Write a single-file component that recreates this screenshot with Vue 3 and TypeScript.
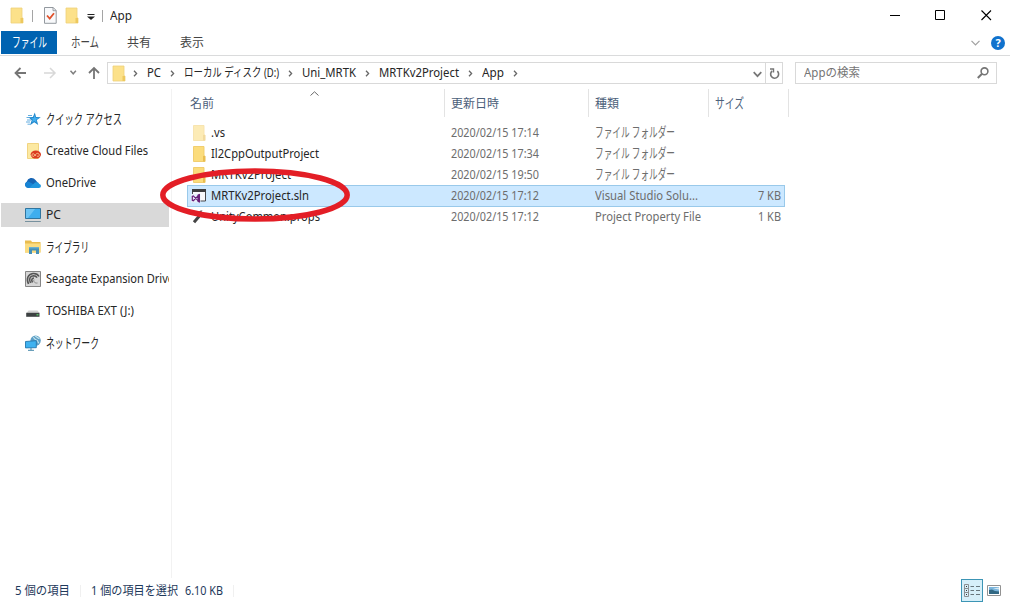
<script setup lang="ts">
import type { Directive } from 'vue'

// Condenses or widens a label so that it takes exactly the given width.
const vFit: Directive<HTMLElement, number> = {
  mounted(el, binding) {
    const natural = el.getBoundingClientRect().width
    if (!natural) return
    el.style.transform = `scaleX(${binding.value / natural})`
    el.style.marginRight = `${binding.value - natural}px`
  },
}

const tabs = [
  { text: 'ファイル', width: 35, box: 56, active: true, kana: true },
  { text: 'ホーム', width: 28, box: 55, kana: true },
  { text: '共有', width: 24, box: 54 },
  { text: '表示', width: 24, box: 52 },
]

const crumbs = [
  { text: 'PC', width: 14 },
  { text: 'ローカル ディスク (D:)', width: 95 },
  { text: 'Uni_MRTK', width: 54 },
  { text: 'MRTKv2Project', width: 80 },
  { text: 'App', width: 22 },
]

const places = [
  { icon: 'star', text: 'クイック アクセス', width: 76, kana: true },
  { icon: 'creative', text: 'Creative Cloud Files', width: 102 },
  { icon: 'cloud', text: 'OneDrive', width: 50 },
  { icon: 'pc', text: 'PC', width: 15, current: true },
  { icon: 'library', text: 'ライブラリ', width: 43, kana: true },
  { icon: 'seagate', text: 'Seagate Expansion Drive', width: 128 },
  { icon: 'drive', text: 'TOSHIBA EXT (J:)', width: 88 },
  { icon: 'network', text: 'ネットワーク', width: 53, kana: true },
]

const files = [
  { icon: 'faded', name: '.vs', w: 14, date: '2020/02/15 17:14', type: 'ファイル フォルダー', tw: 80, kana: true, size: '', sw: 0 },
  { icon: 'folder', name: 'Il2CppOutputProject', w: 108, date: '2020/02/15 17:34', type: 'ファイル フォルダー', tw: 80, kana: true, size: '', sw: 0 },
  { icon: 'folder', name: 'MRTKv2Project', w: 80, date: '2020/02/15 19:50', type: 'ファイル フォルダー', tw: 80, kana: true, size: '', sw: 0 },
  { icon: 'sln', name: 'MRTKv2Project.sln', w: 98, date: '2020/02/15 17:12', type: 'Visual Studio Solu...', tw: 103, size: '7 KB', sw: 23, selected: true },
  { icon: 'props', name: 'UnityCommon.props', w: 109, date: '2020/02/15 17:12', type: 'Project Property File', tw: 106, size: '1 KB', sw: 23 },
]
</script>

<template>
  <div class="window">
    <header class="titlebar">
      <svg class="qa-folder" width="14" height="17" viewBox="0 0 14 17"><path d="M1 1h11v10h1v5H1z" fill="#fce18a" stroke="#efd078" stroke-width=".8" /><path d="M10.500 11h2.500v5h-2.500z" fill="#edc85e" /></svg>
      <i class="bar first"></i>
      <svg class="qa-check" width="13" height="17" viewBox="0 0 13 17"><path d="M.5.5h8.700l3 3v12.800H.5z" fill="#f8f9fb" stroke="#93999f" /><path d="M9 .5v3.200h3" fill="none" stroke="#83898f" stroke-width=".8" /><path d="M3 8.500l2.700 3L10 6.200" fill="none" stroke="#e0512b" stroke-width="1.800" /></svg>
      <svg class="qa-folder second" width="14" height="17" viewBox="0 0 14 17"><path d="M1 1h11v10h1v5H1z" fill="#fce18a" stroke="#efd078" stroke-width=".8" /><path d="M10.500 11h2.500v5h-2.500z" fill="#edc85e" /></svg>
      <svg class="qa-menu" width="8" height="8" viewBox="0 0 8 8"><path d="M.5 1.500h7" stroke="#222" /><path d="M0 3.500h8L4 7z" fill="#222" /></svg>
      <i class="bar"></i>
      <span v-fit="22">App</span>
      <div class="controls">
        <svg width="11" height="11" viewBox="0 0 11 11"><path d="M1 5.500h10" stroke="#000" /></svg>
        <svg width="11" height="11" viewBox="0 0 11 11"><path d="M.5.5h9v9h-9z" fill="none" stroke="#000" /></svg>
        <svg width="11" height="11" viewBox="0 0 11 11"><path d="M.5.5l9.500 9.500M10 .5L.5 10" stroke="#000" stroke-width="1.100" /></svg>
      </div>
    </header>

    <nav class="ribbon">
      <div v-for="t in tabs" :key="t.text" class="tab" :class="{ active: t.active, kana: t.kana }" :style="{ width: t.box + 'px' }">
        <span v-fit="t.width">{{ t.text }}</span>
      </div>
      <div class="ribbon-end">
        <svg width="9" height="6" viewBox="0 0 9 6"><path d="M.5.8l4 4 4-4" fill="none" stroke="#a0a0a0" stroke-width="1.200" /></svg>
        <span class="help">?</span>
      </div>
    </nav>

    <div class="navbar">
      <svg class="nav-arrows" width="88" height="14" viewBox="0 0 88 14" fill="none">
        <path d="M12 7H1.500M6.500 2l-5 5 5 5" stroke="#757575" stroke-width="1.800" />
        <path d="M30 7h11M36 2l5 5-5 5" stroke="#d8d8d8" stroke-width="1.500" />
        <path d="M56.500 4.800l2.700 3 2.700-3" stroke="#808080" stroke-width="1.500" />
        <path d="M80 13V2M75 7l5-5 5 5" stroke="#757575" stroke-width="1.800" />
      </svg>
      <div class="address">
        <svg class="address-folder" width="14" height="17" viewBox="0 0 14 17"><path d="M1 1h11v10h1v5H1z" fill="#fce18a" stroke="#efd078" stroke-width=".8" /><path d="M10.500 11h2.500v5h-2.500z" fill="#edc85e" /></svg>
        <svg class="chev" width="5" height="7" viewBox="0 0 5 7"><path d="M1 .8l2.600 2.700L1 6.200" fill="none" stroke="#686868" stroke-width="1.300" /></svg>
        <template v-for="c in crumbs" :key="c.text">
          <span v-fit="c.width">{{ c.text }}</span>
          <svg class="chev" width="5" height="7" viewBox="0 0 5 7"><path d="M1 .8l2.600 2.700L1 6.200" fill="none" stroke="#686868" stroke-width="1.300" /></svg>
        </template>
        <svg class="drop" width="9" height="7" viewBox="0 0 9 7"><path d="M.7 1.200l3.800 4 3.800-4" fill="none" stroke="#777" stroke-width="1.700" /></svg>
        <div class="refresh">
          <svg width="11" height="13" viewBox="0 0 11 13" fill="none" stroke="#757575"><path d="M8.300 4.200A4 4 0 1 1 3.200 4" stroke-width="1.600" /><path d="M1 2h3.500v3.500" stroke-width="1.400" /></svg>
        </div>
      </div>
      <div class="search">
        <span v-fit="56">Appの検索</span>
        <svg width="12" height="12" viewBox="0 0 12 12"><circle cx="7.500" cy="4.300" r="3.400" fill="none" stroke="#757575" stroke-width="1.600" /><path d="M5 6.800L.8 11" stroke="#757575" stroke-width="2" /></svg>
      </div>
    </div>

    <main class="content">
      <aside class="sidebar">
        <div v-for="p in places" :key="p.text" class="place" :class="{ current: p.current, kana: p.kana }">
          <svg class="place-icon" width="16" height="16" viewBox="0 0 16 16">
            <g v-if="p.icon === 'star'">
              <path d="M9.800 1.500l1.300 4.400 4.700.3-4 2.800 1.400 4.900-4-2.700-4.200 3 1.700-5L3.500 6.200l4.400-.2z" fill="#2187cb" />
              <path d="M9.700 4l1 3 3 .2-2.700 1.600.7 2.800-2.500-1.700-2.400 1.600.9-2.900-1.700-1.300 2.700-.2z" fill="#43aeef" />
              <path d="M3 4.500h4M1.500 6.500h3M2 9h4M1 11h4M2.500 13.200H5" stroke="#3a98d8" stroke-width=".8" />
            </g>
            <g v-else-if="p.icon === 'creative'">
              <path d="M2.500.5h11v15h-11z" fill="#fce9a2" stroke="#efd078" stroke-width=".9" />
              <ellipse cx="10.800" cy="11.600" rx="5.200" ry="4" fill="#dc3b20" />
              <path d="M10.800 13l-1.500-1.700c-1-1.100-2.400-.5-2.400.7 0 1 .9 1.500 1.700 1.400.8-.1 2.500-3.100 3.700-3.100 1.400 0 2 1 2 1.800 0 1.100-1.100 1.700-2.400.9" fill="none" stroke="#fbd9a2" stroke-width=".8" />
            </g>
            <g v-else-if="p.icon === 'cloud'">
              <path d="M3.500 13A3.400 3.400 0 0 1 1.700 6.700 5 5 0 0 1 10.500 5l2.500 3-4 5z" fill="#1765b5" />
              <path d="M4 13c-2 0-4-1-4-3.200 0-2 1.700-3.300 3.500-3.300l8 4.500z" fill="#1683d4" />
              <path d="M4 13L10 7.500c2.600-1 4 .3 4.300 1.500C16.600 9.500 16.500 13 13.700 13z" fill="#2196de" />
            </g>
            <g v-else-if="p.icon === 'pc'">
              <path d="M.5 1.500h15v10H.5z" fill="#3faeee" stroke="#30759f" />
              <path d="M1 2h9l-7 9H1z" fill="#6cc4f4" />
              <path d="M0 14.500h15.800" stroke="#77919e" stroke-width="1" />
            </g>
            <g v-else-if="p.icon === 'library'">
              <path d="M0 1.500h6l1 1.500h8.500V13.500H0z" fill="#e9bc4e" /><path d="M0 4.500h15.500v9H0z" fill="#fbdc80" />
              <path d="M4 8h10v7h-3v-3.500H7V15H4z" fill="#4590b8" /><path d="M4 8h10v1.400H4z" fill="#6bb0d0" />
            </g>
            <g v-else-if="p.icon === 'seagate'">
              <path d="M.5.500h15v15H.5z" fill="#d6d6d6" stroke="#858585" />
              <path d="M3.500 13C1 8 3 3 8 2.500c3-.2 5 1 6 3M5.500 12C3.500 8 5 5 8.500 4.700c2 0 3 1 3.500 2M7.500 11.500C6 9 7 7 9 7" fill="none" stroke="#555" stroke-width="1.600" />
              <path d="M9 8.500c-1 2 1 4 3.500 3.500" fill="none" stroke="#888" />
            </g>
            <g v-else-if="p.icon === 'drive'">
              <path d="M3.500 7.500h9L14.500 10h-13z" fill="#d2d2d2" /><path d="M1.200 9.800h13.300v4H1.200z" fill="#3d4142" />
              <path d="M11.500 11.200h2v1.200h-2z" fill="#5bd36a" />
            </g>
            <g v-else>
              <circle cx="10.600" cy="5.600" r="5.200" fill="#5b9fc6" /><path d="M8 2.500c2 .5 1 2 3.500 2.500S12 7.500 14 8M10 1c2 1 2.500 2 4.500 2.700" fill="none" stroke="#c5e4ee" stroke-width="1.100" />
              <path d="M.5 6.500l10.800-.8v7L.5 12.900z" fill="#3fb2f0" stroke="#2577ad" stroke-width=".9" /><path d="M6 13v2M3 15.300h6" stroke="#4588a9" />
            </g>
          </svg>
          <span v-fit="p.width">{{ p.text }}</span>
        </div>
      </aside>

      <section class="list">
        <div class="columns">
          <div class="col c-name"><span v-fit="24">名前</span>
            <svg class="sort" width="9" height="5" viewBox="0 0 9 5"><path d="M.5 4.500l4-3.700 4 3.700" fill="none" stroke="#696969" stroke-width="1" /></svg>
          </div>
          <div class="col c-date"><span v-fit="48">更新日時</span></div>
          <div class="col c-type"><span v-fit="24">種類</span></div>
          <div class="col c-size kana"><span v-fit="29">サイズ</span></div>
        </div>
        <div v-for="f in files" :key="f.name" class="row" :class="{ selected: f.selected }">
          <div class="cell c-name">
            <svg width="16" height="16" viewBox="0 0 16 16">
              <g v-if="f.icon === 'folder' || f.icon === 'faded'" :opacity="f.icon === 'faded' ? 0.55 : 1">
                <path d="M2.500.5h10.500v9.500h1v5.500h-11.500z" fill="#fbdc7c" stroke="#efcb68" stroke-width=".9" /><path d="M12 10h2.200v5.500H12z" fill="#e9bd50" />
              </g>
              <g v-else-if="f.icon === 'sln'">
                <path d="M1.500 1.500h13v11.500h-13z" fill="#f7f7fa" stroke="#48484c" /><path d="M1 1h14v3H1z" fill="#3d3d40" />
                <path d="M0 6h9.500v8.500H0z" fill="#e6eefa" />
                <path d="M1.300 8.300v4l1 .4 5.200-5.200v5.600L2.300 7.900z" fill="none" stroke="#68217a" stroke-width="1.200" /><path d="M6.500 6.800l2.500-1v9l-2.500-1z" fill="#68217a" />
              </g>
              <g v-else>
                <path d="M3 13.200l6-7" stroke="#444" stroke-width="3" /><path d="M7.500 6.500C6.500 3 9 1 11.500 1.500L9.800 3.800l1.800 1.700L14 4c.5 3-2 5-4.500 4z" fill="#555" />
              </g>
            </svg>
            <span v-fit="f.w">{{ f.name }}</span>
          </div>
          <div class="cell c-date"><span v-fit="88">{{ f.date }}</span></div>
          <div class="cell c-type" :class="{ kana: f.kana }"><span v-fit="f.tw">{{ f.type }}</span></div>
          <div class="cell c-size"><span v-if="f.size" v-fit="f.sw">{{ f.size }}</span></div>
        </div>
      </section>
    </main>

    <footer class="status">
      <span v-fit="55">5 個の項目</span><i></i>
      <span v-fit="87">1 個の項目を選択</span><span v-fit="38" class="bytes">6.10 KB</span><i></i>
      <div class="views">
        <div class="details">
          <svg width="16" height="14" viewBox="0 0 16 14" fill="none"><path d="M.5.5h4v12h-4zM.5 4.500h4M.5 8.500h4" stroke="#8b8f92" /><path d="M2 2.500h1M2 6.500h1M2 10.500h1" stroke="#333" /><path d="M6.500 2.500h3.500M12 2.500h4M6.500 6.500h3.500M12 6.500h4M6.500 10.500h3.500M12 10.500h4" stroke="#68767c" /></svg>
        </div>
        <svg class="thumbs" width="14" height="11" viewBox="0 0 14 11"><path d="M.5.5h13v10H.5z" fill="#fff" stroke="#929292" /><path d="M2 2h10v7H2z" fill="#7bb5dc" /><path d="M2 5l3-.5 3 1.500 4 .5V9H2z" fill="#326883" /><path d="M6 3.500l6-1v2z" fill="#d7e9f3" /></svg>
      </div>
    </footer>

    <svg class="marker" width="190" height="54" viewBox="0 0 190 54"><ellipse cx="95" cy="27" rx="92.200" ry="24" fill="none" stroke="#e31e26" stroke-width="5.500" /></svg>
  </div>
</template>

<style>
body {
  margin: 0;
  background: #fff;
}
</style>

<style scoped>
.window {
  position: relative;
  display: flex;
  flex-direction: column;
  width: 1010px;
  height: 603px;
  overflow: hidden;
  background: #fff;
  color: #262626;
  font: 12px/20px "Noto Sans", "Noto Sans CJK JP", sans-serif;
}
.window svg {
  display: block;
  flex: none;
}
.window span {
  display: inline-block;
  flex: none;
  white-space: nowrap;
  transform-origin: 0 50%;
}
.window .kana {
  font-size: 13.5px;
}
.titlebar {
  display: flex;
  align-items: center;
  flex: none;
  height: 31px;
  padding-left: 10px;
}
.bar {
  width: 1px;
  height: 12px;
  margin: 0 7px;
  background: #a5a5a5;
}
.bar.first {
  margin: 0 11px 0 8px;
}
.qa-folder.second {
  margin-left: 8px;
}
.qa-menu {
  margin: 3px 0 0 8px;
}
.controls {
  display: flex;
  gap: 35px;
  margin: 0 18px 0 auto;
}
.ribbon {
  display: flex;
  flex: none;
  box-sizing: border-box;
  height: 25px;
  padding-left: 1px;
  border-bottom: 1px solid #dadbdc;
}
.tab {
  display: flex;
  justify-content: center;
  height: 23px;
  line-height: 23px;
  color: #444;
}
.tab.active {
  background: #0063b1;
  color: #fff;
}
.ribbon-end {
  display: flex;
  align-items: center;
  gap: 11px;
  height: 24px;
  margin: 0 5px 0 auto;
}
.ribbon-end .help {
  width: 14px;
  height: 14px;
  border-radius: 50%;
  background: #1072cd;
  color: #fff;
  font-size: 11px;
  font-weight: bold;
  line-height: 14px;
  text-align: center;
}
.navbar {
  display: flex;
  align-items: center;
  flex: none;
  height: 33px;
  padding-top: 1px;
  box-sizing: border-box;
}
.nav-arrows {
  margin-left: 14px;
}
.address {
  display: flex;
  align-items: center;
  box-sizing: border-box;
  width: 676px;
  height: 22px;
  margin-left: 5px;
  padding-left: 4px;
  border: 1px solid #d9d9d9;
}
.chev {
  margin: 1px 9px 0;
}
.address-folder + .chev {
  margin-left: 7px;
}
.drop {
  margin: 2px 3px 0 auto;
}
.refresh {
  display: flex;
  align-items: center;
  justify-content: center;
  width: 16px;
  height: 20px;
  border-left: 1px solid #d9d9d9;
}
.search {
  display: flex;
  align-items: center;
  justify-content: space-between;
  box-sizing: border-box;
  width: 202px;
  height: 22px;
  margin-left: 12px;
  padding: 0 7px 0 8px;
  border: 1px solid #d9d9d9;
  color: #747474;
}
.content {
  display: flex;
  flex: none;
  height: 489px;
}
.sidebar {
  display: flex;
  flex-direction: column;
  gap: 8px;
  box-sizing: border-box;
  width: 172px;
  padding: 18px 2px 0 1px;
  border-right: 1px solid #f2f2f2;
}
.place {
  display: flex;
  align-items: center;
  gap: 5px;
  flex: none;
  box-sizing: border-box;
  height: 24px;
  padding-left: 24px;
  overflow: hidden;
}
.place.current {
  background: #d9d9d9;
}
.list {
  width: 617px;
  padding-left: 15px;
}
.columns {
  display: flex;
  height: 28px;
  margin-bottom: 5px;
  line-height: 29px;
  color: #4c607a;
}
.col {
  position: relative;
  border-right: 1px solid #e3e3e3;
}
.c-name {
  box-sizing: border-box;
  width: 258px;
  padding-left: 3px;
}
.c-date {
  box-sizing: border-box;
  width: 144px;
  padding-left: 6px;
}
.c-type {
  box-sizing: border-box;
  width: 120px;
  padding-left: 6px;
}
.c-size {
  box-sizing: border-box;
  width: 80px;
  padding-left: 6px;
}
.sort {
  position: absolute;
  top: 2px;
  left: 123px;
}
.row {
  display: flex;
  box-sizing: border-box;
  width: 598px;
  height: 21px;
  line-height: 21px;
  color: #6d6d6d;
}
.row.selected {
  height: 22px;
  margin-bottom: -1px;
  border: 1px solid #99c9ea;
  background: #cce8ff;
}
.row.selected .cell {
  margin: 0 1px 0 -1px;
  line-height: 20px;
}
.row .c-name {
  display: flex;
  align-items: center;
  gap: 4px;
  padding-left: 4px;
  color: #262626;
}
.row .c-size {
  display: flex;
  justify-content: flex-end;
  width: 72px;
}
.status {
  display: flex;
  align-items: center;
  flex: none;
  height: 25px;
  padding-left: 15px;
  color: #1e395b;
}
.status i {
  width: 1px;
  height: 12px;
  margin: 0 10px;
  background: #f0f0f0;
}
.status .bytes {
  margin-left: 7px;
}
.views {
  display: flex;
  align-items: center;
  gap: 4px;
  margin: 0 9px 0 auto;
}
.details {
  display: flex;
  align-items: center;
  justify-content: center;
  box-sizing: border-box;
  width: 22px;
  height: 23px;
  border: 1px solid #3c95b5;
  background: #d6eff9;
}
.marker {
  position: absolute;
  top: 168px;
  left: 160px;
}
</style>
